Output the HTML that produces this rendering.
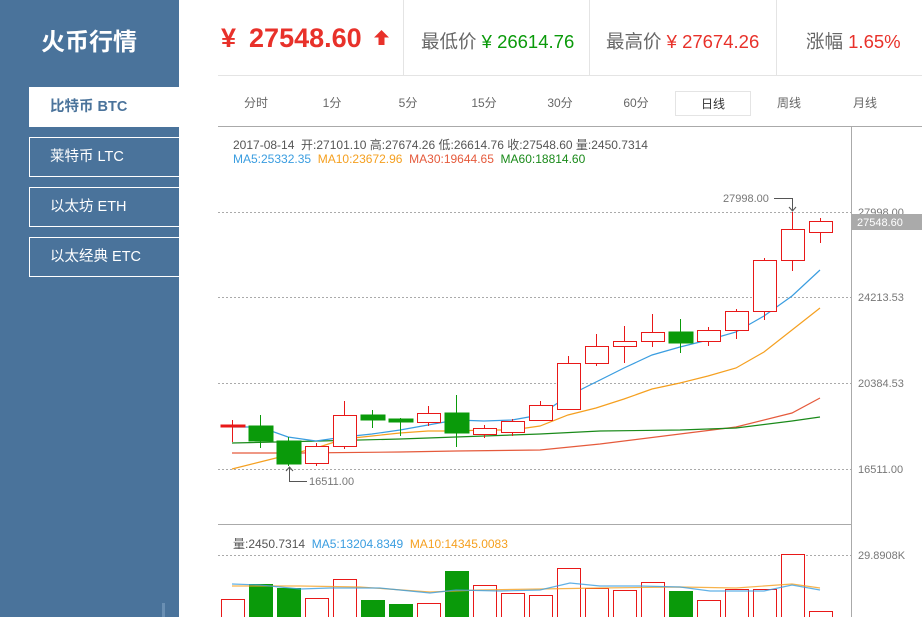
<!DOCTYPE html>
<html><head><meta charset="utf-8"><style>
*{margin:0;padding:0;box-sizing:border-box}
body{width:922px;height:617px;overflow:hidden;background:#fff;font-family:"Liberation Sans","Noto Sans CJK SC",sans-serif;position:relative}
.sb{position:absolute;left:0;top:0;width:179px;height:617px;background:#4a739b}
.title{position:absolute;left:41px;top:22px;color:#fff;font-size:24px;font-weight:bold}
.mi{position:absolute;left:29px;width:150px;height:40px;border:1.5px solid #fff;border-right:none;color:#fff;font-size:14.5px;line-height:39px;padding-left:20px}
.mi.on{background:#fff;color:#4a739b;font-weight:bold}
.t{position:absolute;white-space:nowrap}
.vd{position:absolute;top:0;width:1px;height:75px;background:#e4e4e4}
.tab{position:absolute;top:91px;height:25px;width:76px;text-align:center;font-size:12px;color:#666;line-height:25px}
</style></head><body>
<div class="sb"></div>
<div class="title">火币行情</div>
<div class="mi on" style="top:87px">比特币 BTC</div>
<div class="mi" style="top:137px">莱特币 LTC</div>
<div class="mi" style="top:187px">以太坊 ETH</div>
<div class="mi" style="top:237px">以太经典 ETC</div>
<div style="position:absolute;left:162px;top:603px;width:3px;height:14px;background:#6a8fb3"></div>

<div class="t" style="left:221px;top:23px;font-size:27px;font-weight:bold;color:#e8312a">¥<span style="margin-left:13px">27548.60</span></div>
<svg style="position:absolute;left:373px;top:29px" width="17" height="17"><path d="M8.5 1 L16 8.5 L11.5 8.5 L11.5 16 L5.5 16 L5.5 8.5 L1 8.5Z" fill="#e8312a"/></svg>
<div class="vd" style="left:403px"></div><div class="vd" style="left:589px"></div><div class="vd" style="left:776px"></div>
<div style="position:absolute;left:218px;top:75px;width:704px;height:1px;background:#e4e4e4"></div>
<div class="t" style="left:421px;top:28px;font-size:18.5px;color:#666">最低价 <span style="color:#0a9a0a">¥ 26614.76</span></div>
<div class="t" style="left:606px;top:28px;font-size:18.5px;color:#666">最高价 <span style="color:#e8312a">¥ 27674.26</span></div>
<div class="t" style="left:806px;top:28px;font-size:18.5px;color:#666">涨幅 <span style="color:#e8312a">1.65%</span></div>

<div class="tab" style="left:218px">分时</div><div class="tab" style="left:294px">1分</div><div class="tab" style="left:370px">5分</div><div class="tab" style="left:446px">15分</div><div class="tab" style="left:522px">30分</div><div class="tab" style="left:598px">60分</div>
<div class="tab" style="left:675px;border:1px solid #e4e4e4;color:#333">日线</div><div class="tab" style="left:751px">周线</div><div class="tab" style="left:827px">月线</div>

<div class="t" style="left:233px;top:136px;font-size:12px;color:#555">2017-08-14&nbsp; 开:27101.10 高:27674.26 低:26614.76 收:27548.60 量:2450.7314</div>
<div class="t" style="left:233px;top:152px;font-size:12px"><span style="color:#3a9de0">MA5:25332.35</span>&nbsp; <span style="color:#f5a020">MA10:23672.96</span>&nbsp; <span style="color:#e55a3c">MA30:19644.65</span>&nbsp; <span style="color:#1a8a1a">MA60:18814.60</span></div>
<div class="t" style="left:233px;top:535px;font-size:12px;color:#555">量:2450.7314&nbsp; <span style="color:#3a9de0">MA5:13204.8349</span>&nbsp; <span style="color:#f5a020">MA10:14345.0083</span></div>

<svg style="position:absolute;left:0;top:0" width="922" height="617">
<g stroke="#aaa" fill="none">
<line x1="218" y1="126.5" x2="922" y2="126.5"/>
<line x1="851.5" y1="126" x2="851.5" y2="617"/>
<line x1="218" y1="524.5" x2="851" y2="524.5"/>
<g stroke-dasharray="2,2"><line x1="218" y1="212.5" x2="851" y2="212.5"/><line x1="218" y1="297.5" x2="851" y2="297.5"/><line x1="218" y1="383.5" x2="851" y2="383.5"/><line x1="218" y1="469.5" x2="851" y2="469.5"/><line x1="218" y1="555.5" x2="851" y2="555.5"/></g>
</g>
<g font-size="11" fill="#777" font-family="Liberation Sans,sans-serif">
<text x="858" y="216">27998.00</text><text x="858" y="301">24213.53</text><text x="858" y="387">20384.53</text><text x="858" y="473">16511.00</text><text x="858" y="559">29.8908K</text>
<text x="723" y="202">27998.00</text><text x="309" y="485">16511.00</text>
</g>
<rect x="852" y="214" width="70" height="16" fill="#aaa"/><text x="857" y="226" font-size="11" fill="#fff" font-family="Liberation Sans,sans-serif">27548.60</text>
<g stroke="#555" fill="none"><path d="M774 198.5H792.5V211M789 207l3.5 4 3.5-4"/><path d="M289.5 467V481.5H307M286 471l3.5-4 3.5 4"/></g>
<g stroke-width="1.2" fill="none">
<polyline stroke="#e55a3c" points="232,453 300,453 400,452 456,451 540,450 600,444 680,434 736,427 792,413 820,398"/>
<polyline stroke="#1a8a1a" points="232,443 320,441 400,439 456,437 540,434 600,431 680,430 736,428 792,421 820,417"/>
<polyline stroke="#f5a020" points="232,469 260,462 288,455 316,448 344,439 372,436 400,433 428,431 456,431 484,430 512,430 540,426 568,415 596,408 624,399 652,389 680,383 708,376 736,368 764,352 792,330 820,308"/>
<polyline stroke="#3a9de0" points="232,427 260,427 288,437 316,441 344,437 372,434 400,430 428,425 456,420 484,421 512,420 540,415 568,396 596,382 624,368 652,355 680,347 708,340 736,332 764,316 792,296 820,270"/>
</g>
<g stroke="#e81818" fill="#fff">
<line x1="232.5" y1="420" x2="232.5" y2="442"/><rect x="221" y="425" width="24" height="2" fill="#e81818"/>
<line x1="316.5" y1="443" x2="316.5" y2="466"/><rect x="305.5" y="446.5" width="23" height="17"/>
<line x1="344.5" y1="401" x2="344.5" y2="449"/><rect x="333.5" y="415.5" width="23" height="31"/>
<line x1="428.5" y1="406" x2="428.5" y2="426"/><rect x="417.5" y="413.5" width="23" height="9"/>
<line x1="484.5" y1="425" x2="484.5" y2="438"/><rect x="473.5" y="428.5" width="23" height="6"/>
<line x1="512.5" y1="419" x2="512.5" y2="436"/><rect x="501.5" y="421.5" width="23" height="11"/>
<line x1="540.5" y1="401" x2="540.5" y2="420"/><rect x="529.5" y="405.5" width="23" height="15"/>
<line x1="568.5" y1="356" x2="568.5" y2="410"/><rect x="557.5" y="363.5" width="23" height="46"/>
<line x1="596.5" y1="334" x2="596.5" y2="366"/><rect x="585.5" y="346.5" width="23" height="17"/>
<line x1="624.5" y1="326" x2="624.5" y2="363"/><rect x="613.5" y="341.5" width="23" height="5"/>
<line x1="652.5" y1="314" x2="652.5" y2="347"/><rect x="641.5" y="332.5" width="23" height="9"/>
<line x1="708.5" y1="327" x2="708.5" y2="346"/><rect x="697.5" y="330.5" width="23" height="11"/>
<line x1="736.5" y1="309" x2="736.5" y2="339"/><rect x="725.5" y="311.5" width="23" height="19"/>
<line x1="764.5" y1="258" x2="764.5" y2="320"/><rect x="753.5" y="260.5" width="23" height="51"/>
<line x1="792.5" y1="212" x2="792.5" y2="271"/><rect x="781.5" y="229.5" width="23" height="31"/>
<line x1="820.5" y1="218" x2="820.5" y2="243"/><rect x="809.5" y="221.5" width="23" height="11"/>
</g>
<g stroke="#0a9a0a" fill="#0a9a0a">
<line x1="260.5" y1="415" x2="260.5" y2="448"/><rect x="249" y="426" width="24" height="15"/>
<line x1="288.5" y1="437" x2="288.5" y2="466"/><rect x="277" y="441" width="24" height="23"/>
<line x1="372.5" y1="410" x2="372.5" y2="428"/><rect x="361" y="415" width="24" height="5"/>
<line x1="400.5" y1="418" x2="400.5" y2="436"/><rect x="389" y="419" width="24" height="3"/>
<line x1="456.5" y1="395" x2="456.5" y2="447"/><rect x="445" y="413" width="24" height="20"/>
<line x1="680.5" y1="319" x2="680.5" y2="353"/><rect x="669" y="332" width="24" height="11"/>
</g>
<g stroke="#e81818" fill="#fff">
<rect x="221.5" y="599.5" width="23" height="20"/><rect x="305.5" y="598.5" width="23" height="20"/><rect x="333.5" y="579.5" width="23" height="40"/><rect x="417.5" y="603.5" width="23" height="20"/><rect x="473.5" y="585.5" width="23" height="40"/><rect x="501.5" y="593.5" width="23" height="30"/><rect x="529.5" y="595.5" width="23" height="30"/><rect x="557.5" y="568.5" width="23" height="60"/><rect x="585.5" y="588.5" width="23" height="30"/><rect x="613.5" y="590.5" width="23" height="30"/><rect x="641.5" y="582.5" width="23" height="40"/><rect x="697.5" y="600.5" width="23" height="20"/><rect x="725.5" y="589.5" width="23" height="30"/><rect x="753.5" y="589.5" width="23" height="30"/><rect x="781.5" y="554.5" width="23" height="70"/><rect x="809.5" y="611.5" width="23" height="20"/>
</g>
<g fill="#0a9a0a"><rect x="249" y="584" width="24" height="33"/><rect x="277" y="588" width="24" height="29"/><rect x="361" y="600" width="24" height="17"/><rect x="389" y="604" width="24" height="13"/><rect x="445" y="571" width="24" height="46"/><rect x="669" y="591" width="24" height="26"/></g>
<polyline fill="none" stroke="#f5a020" stroke-width="1.2" opacity=".8" points="232,586 300,586 360,587 430,592 480,590 540,589 600,588 680,587 736,588 792,584 820,588"/>
<polyline fill="none" stroke="#3a9de0" stroke-width="1.2" opacity=".8" points="232,584 260,585 300,589 330,588 380,588 430,593 456,590 500,591 540,590 570,583 600,586 640,586 680,587 710,591 764,591 792,585 820,590"/>
</svg>
</body></html>
